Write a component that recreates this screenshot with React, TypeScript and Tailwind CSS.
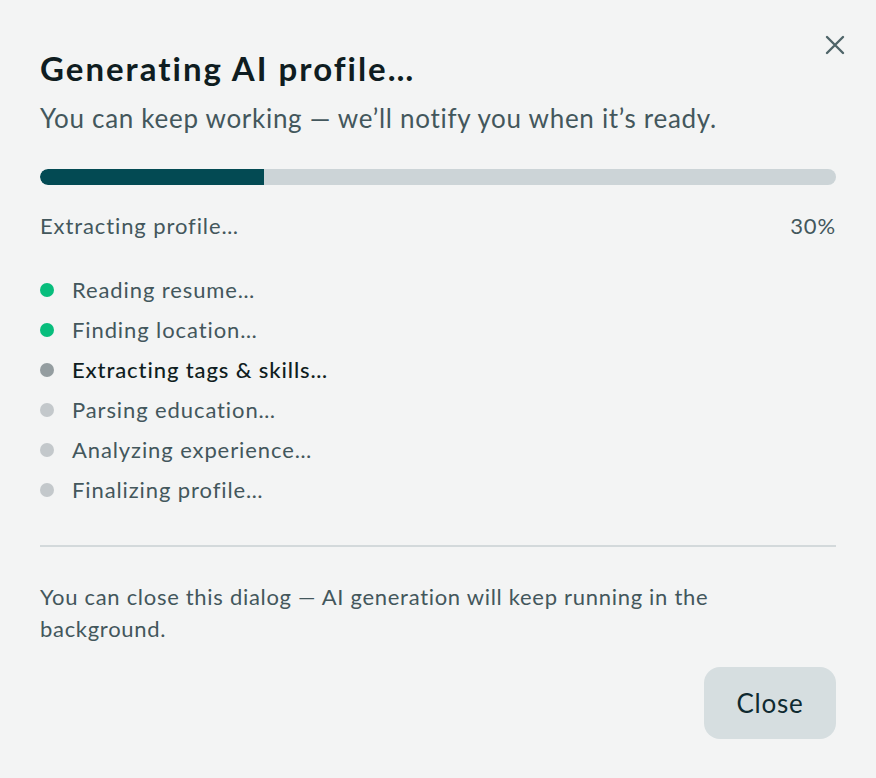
import React from "react";

const steps = [
  { label: "Reading resume…", state: "done" },
  { label: "Finding location…", state: "done" },
  { label: "Extracting tags & skills…", state: "active" },
  { label: "Parsing education…", state: "pending" },
  { label: "Analyzing experience…", state: "pending" },
  { label: "Finalizing profile…", state: "pending" },
];

export default function App() {
  return (
    <div
      className="w-[876px] h-[778px] bg-[#f3f4f4] relative"
      style={{ fontFamily: "Lato, 'Open Sans', sans-serif" }}
    >
      <button className="absolute left-[825px] top-[35px] w-[20px] h-[20px] flex items-center justify-center text-[#4e6468]">
        <svg width="20" height="20" viewBox="0 0 20 20" fill="none" stroke="currentColor" strokeWidth="2.4" strokeLinecap="round">
          <path d="M2 2 L18 18 M18 2 L2 18" />
        </svg>
      </button>
      <div className="px-[40px] pt-[46px] flex flex-col">
        <h1 className="text-[33px] leading-[44px] font-bold text-[#0f1d21] tracking-[2px]">
          Generating AI profile…
        </h1>
        <p className="mt-[12px] text-[26px] leading-[32px] text-[#43575c] tracking-[0.7px]">
          You can keep working — we’ll notify you when it’s ready.
        </p>
        <div className="mt-[35px] h-[16px] w-full rounded-full bg-[#ccd4d7] overflow-hidden">
          <div className="h-full bg-[#034a53] rounded-l-full" style={{ width: "28.2%" }} />
        </div>
        <div className="mt-[26px] flex justify-between text-[22px] leading-[30px] text-[#43575c] tracking-[0.9px]">
          <span>Extracting profile…</span>
          <span>30%</span>
        </div>
        <ul className="mt-[34px] flex flex-col gap-[10px]">
          {steps.map((s) => (
            <li key={s.label} className="flex items-center h-[30px]">
              <span
                className={
                  "w-[14px] h-[14px] rounded-full mr-[18px] shrink-0 " +
                  (s.state === "done"
                    ? "bg-[#07bd7c]"
                    : s.state === "active"
                    ? "bg-[#949da0]"
                    : "bg-[#c3c8cb]")
                }
              />
              <span
                className={
                  "text-[22px] leading-[30px] tracking-[0.9px] " +
                  (s.state === "active" ? "text-[#0f1d21] font-medium" : "text-[#43575c]")
                }
              >
                {s.label}
              </span>
            </li>
          ))}
        </ul>
        <div className="mt-[40px] h-[2px] bg-[#d3d9db]" />
        <p className="mt-[34px] text-[22px] leading-[32px] text-[#43575c] tracking-[0.7px] max-w-[740px]">
          You can close this dialog — AI generation will keep running in the background.
        </p>
        <div className="mt-[22px] flex justify-end">
          <button className="w-[132px] h-[72px] rounded-[16px] bg-[#d6dee0] text-[26px] text-[#0f2a30] tracking-[0.8px]">
            Close
          </button>
        </div>
      </div>
    </div>
  );
}
